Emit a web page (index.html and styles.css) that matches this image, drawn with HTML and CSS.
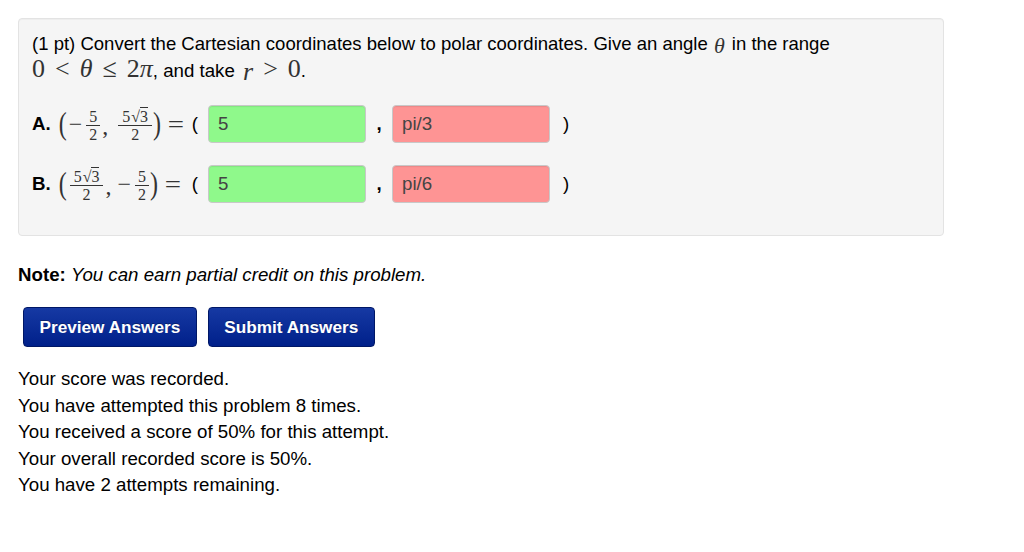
FILE: index.html
```html
<!DOCTYPE html>
<html>
<head>
<meta charset="utf-8">
<link rel="stylesheet" href="styles.css">
</head>
<body>
<div class="problem">
  <div class="line1">(1 pt) Convert the Cartesian coordinates below to polar coordinates. Give an angle <span class="m mi theta">θ</span> in the range</div>
  <div class="line2"><span class="m big"><span>0</span><span class="rel">&lt;</span><i>θ</i><span class="rel">≤</span><span>2</span><i>π</i></span>, and take <span class="m big"><i class="rlow">r</i><span class="rel">&gt;</span><span>0</span></span>.</div>

  <div class="row">
    <div class="lead">
      <b class="lbl">A.</b>
      <span class="m expr">
        <span class="paren">(</span><span class="minus">−</span><span class="frac"><span>5</span><span>2</span></span><span class="sep">,</span><span class="frac wide"><span>5<span class="rt">√</span><span class="ov">3</span></span><span>2</span></span><span class="paren">)</span>
        <span class="eq">=</span>
      </span>
      <span class="open">(</span>
    </div>
    <span class="ans ok">5</span>
    <span class="comma">,</span>
    <span class="ans bad">pi/3</span>
    <span class="close">)</span>
  </div>
  <div class="row">
    <div class="lead">
      <b class="lbl">B.</b>
      <span class="m expr">
        <span class="paren">(</span><span class="frac wide first"><span>5<span class="rt">√</span><span class="ov">3</span></span><span>2</span></span><span class="sep">,</span><span class="minus">−</span><span class="frac"><span>5</span><span>2</span></span><span class="paren">)</span>
        <span class="eq">=</span>
      </span>
      <span class="open">(</span>
    </div>
    <span class="ans ok">5</span>
    <span class="comma">,</span>
    <span class="ans bad">pi/6</span>
    <span class="close">)</span>
  </div>
</div>

<p class="note"><b>Note:</b> <i>You can earn partial credit on this problem.</i></p>

<div class="buttons">
  <button class="btn">Preview Answers</button>
  <button class="btn">Submit Answers</button>
</div>

<div class="score">
  <div>Your score was recorded.</div>
  <div>You have attempted this problem 8 times.</div>
  <div>You received a score of 50% for this attempt.</div>
  <div>Your overall recorded score is 50%.</div>
  <div>You have 2 attempts remaining.</div>
</div>
</body>
</html>
```
FILE: styles.css
```css
html, body { margin: 0; padding: 0; background: #fff; }
body {
  font-family: "Liberation Sans", Arial, sans-serif;
  font-size: 18.7px;
  color: #000;
  padding: 18px 18px 0 18px;
}
.problem {
  box-sizing: border-box;
  width: 926px;
  height: 218px;
  background: #f5f5f5;
  border: 1px solid #e3e3e3;
  border-radius: 4px;
  padding: 12px 13px 0 13px;
  box-shadow: inset 0 1px 1px rgba(0,0,0,0.03);
}
.line1 { height: 24px; line-height: 24px; white-space: nowrap; font-size: 18.55px; }
.line2 { height: 28px; line-height: 28px; white-space: nowrap; }
.m { font-family: "Liberation Serif", "Times New Roman", serif; color: #333; }
.mi { font-style: italic; }
.theta { font-size: 22px; position: relative; top: 3px; margin: 0 2px 0 1px; }
.big { font-size: 26px; }
.big i { font-style: italic; }
.rel { margin: 0 10px; }
.rel:first-child { margin-left: 10px; }
.rlow { position: relative; top: 3px; margin-left: 3px; }
.row {
  display: flex;
  align-items: center;
  height: 40px;
  margin-top: 20px;
}
.line2 + .row { margin-top: 21px; }
.lead {
  width: 176px;
  display: flex;
  align-items: center;
}
.lbl { font-weight: bold; margin-right: 8px; }
.expr { font-size: 24px; display: inline-flex; align-items: center; white-space: nowrap; }
.paren { display: inline-block; transform: scaleY(1.3); }
.minus { margin-left: 2px; }
.sep { margin: 0 4px 0 1px; position: relative; top: 2px; }
.frac {
  display: inline-flex;
  flex-direction: column;
  align-items: center;
  font-size: 16px;
  line-height: 15px;
  margin: 0 1px 0 4px;
  position: relative;
  top: 1px;
}
.frac.wide { margin-left: 6px; }
.frac.first { margin-left: 3px; }
.frac > span:first-child { border-bottom: 1px solid #333; padding: 0 3px 1px; }
.frac.wide > span:first-child { padding: 0 4px 1px; }
.frac > span:last-child { padding-top: 1px; }
.rt { margin-left: 1px; }
.ov { border-top: 1px solid #333; line-height: 14px; }
.eq { margin: 0 6px 0 8px; transform: scaleX(1.2); display: inline-block; }
.open { margin-left: auto; margin-right: 10px; }
.ans {
  box-sizing: border-box;
  width: 158px;
  height: 38px;
  border: 1px solid #c8c8c8;
  border-radius: 4px;
  padding: 0 9px;
  display: flex;
  align-items: center;
  color: #444;
  font-size: 18.7px;
  box-shadow: inset 0 1px 1px rgba(0,0,0,0.08);
}
.ok { background: #8ff98b; }
.bad { background: #fe9494; }
.comma { width: 26px; text-align: center; font-weight: bold; }
.close { margin-left: 13px; }
.note { margin: 29px 0 0 0; line-height: 20px; }
.buttons { display: flex; gap: 11px; margin: 22px 0 0 5px; }
.btn {
  height: 40px;
  padding: 0 15.5px;
  border: 1px solid #001766;
  border-radius: 4px;
  background: linear-gradient(#1639a3, #00208a);
  color: #fff;
  font-family: "Liberation Sans", Arial, sans-serif;
  font-weight: bold;
  font-size: 17.2px;
  text-shadow: 0 -1px 0 rgba(0,0,0,0.3);
}
.score { margin-top: 19px; line-height: 26.5px; }
```
